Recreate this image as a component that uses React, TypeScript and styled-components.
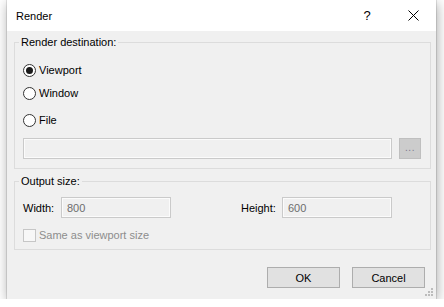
import React from 'react';
import styled, { createGlobalStyle } from 'styled-components';

const GlobalStyle = createGlobalStyle`
  html, body {
    margin: 0;
    padding: 0;
    background: #ffffff;
  }
  body {
    font-family: 'Liberation Sans', Arial, sans-serif;
    font-size: 11px;
    color: #000;
  }
`;

const Window = styled.div`
  position: relative;
  display: flex;
  flex-direction: column;
  margin-left: 7px;
  width: 429px;
  height: 299px;
  background-color: #f0f0f0;
  box-shadow: 0 0 0 1px rgba(0, 0, 0, 0.1), 1px 3px 12px rgba(0, 0, 0, 0.35);
`;

const TitleBar = styled.div`
  display: flex;
  align-items: center;
  height: 31px;
  padding-left: 9px;
  background-color: #fff;
`;

const Title = styled.span`
  flex: 1;
  font-size: 11px;
`;

const CaptionButton = styled.div`
  display: flex;
  align-items: center;
  justify-content: center;
  width: 46px;
  height: 31px;
  font-size: 13px;
`;

const Body = styled.div`
  flex: 1;
  display: flex;
  flex-direction: column;
  padding: 4px 5px 11px 7px;
`;

const Group = styled.fieldset<{ $gap?: number }>`
  margin: ${(p) => p.$gap ?? 0}px 0 0 0;
  padding: 0;
  border: 1px solid #dcdcdc;
  min-width: 0;
`;

const Legend = styled.legend`
  margin-left: 4px;
  padding: 0 2px;
  line-height: 14px;
  font-size: 11px;
`;

const GroupContent = styled.div<{ $top: number; $bottom: number }>`
  display: flex;
  flex-direction: column;
  padding: ${(p) => p.$top}px 9px ${(p) => p.$bottom}px 8px;
`;

const OptionRow = styled.label<{ $gap?: number; $disabled?: boolean }>`
  display: flex;
  align-items: center;
  gap: 3px;
  height: 20px;
  margin-top: ${(p) => p.$gap ?? 0}px;
  color: ${(p) => (p.$disabled ? '#8d8d8d' : '#000')};
`;

const RadioMark = styled.span<{ $checked?: boolean }>`
  display: flex;
  align-items: center;
  justify-content: center;
  box-sizing: border-box;
  width: 13px;
  height: 13px;
  border: 1px solid #333;
  border-radius: 50%;
  background-color: #fff;

  &::after {
    content: '';
    display: ${(p) => (p.$checked ? 'block' : 'none')};
    width: 7px;
    height: 7px;
    border-radius: 50%;
    background-color: #1a1a1a;
  }
`;

const CheckMark = styled.span`
  box-sizing: border-box;
  width: 13px;
  height: 13px;
  border: 1px solid #c6c6c6;
  background-color: #f7f7f7;
`;

const FileRow = styled.div`
  display: flex;
  gap: 7px;
  margin-top: 8px;
`;

const TextBox = styled.div<{ $width?: number }>`
  box-sizing: border-box;
  ${(p) => (p.$width ? `width: ${p.$width}px;` : 'flex: 1;')}
  height: 21px;
  padding-left: 5px;
  display: flex;
  align-items: center;
  border: 1px solid #cacaca;
  box-shadow: inset 0 0 0 1px #fbfbfb;
  background-color: #f0f0f0;
  color: #6d6d6d;
`;

const BrowseButton = styled.div`
  box-sizing: border-box;
  width: 22px;
  height: 21px;
  display: flex;
  align-items: center;
  justify-content: center;
  padding-bottom: 3px;
  border: 1px solid #bfbfbf;
  background-color: #cccccc;
  color: #7d7a8e;
  font-size: 10px;
  letter-spacing: 0.5px;
`;

const SizeRow = styled.div`
  display: flex;
  align-items: center;
`;

const FieldLabel = styled.span<{ $width: number; $gap?: number }>`
  width: ${(p) => p.$width}px;
  margin-left: ${(p) => p.$gap ?? 0}px;
`;

const Footer = styled.div`
  display: flex;
  justify-content: flex-end;
  gap: 12px;
  margin-top: auto;
  padding-right: 6px;
`;

const PushButton = styled.div`
  box-sizing: border-box;
  width: 73px;
  height: 21px;
  display: flex;
  align-items: center;
  justify-content: center;
  border: 1px solid #adadad;
  background-color: #e1e1e1;
`;

const SizeGrip = styled.svg`
  position: absolute;
  right: 2px;
  bottom: 2px;
`;

function CloseIcon(): React.ReactElement {
  return (
    <svg width="11" height="11" viewBox="0 0 11 11">
      <path d="M0.5 0.5 L10.5 10.5 M10.5 0.5 L0.5 10.5" stroke="#000" strokeWidth="1" fill="none" />
    </svg>
  );
}

function App(): React.ReactElement {
  return (
    <>
      <GlobalStyle />
      <Window>
        <TitleBar>
          <Title>Render</Title>
          <CaptionButton>?</CaptionButton>
          <CaptionButton>
            <CloseIcon />
          </CaptionButton>
        </TitleBar>
        <Body>
          <Group>
            <Legend>Render destination:</Legend>
            <GroupContent $top={11} $bottom={9}>
              <OptionRow>
                <RadioMark $checked />
                Viewport
              </OptionRow>
              <OptionRow $gap={3}>
                <RadioMark />
                Window
              </OptionRow>
              <OptionRow $gap={7}>
                <RadioMark />
                File
              </OptionRow>
              <FileRow>
                <TextBox />
                <BrowseButton>...</BrowseButton>
              </FileRow>
            </GroupContent>
          </Group>
          <Group $gap={5}>
            <Legend>Output size:</Legend>
            <GroupContent $top={9} $bottom={4}>
              <SizeRow>
                <FieldLabel $width={38}>Width:</FieldLabel>
                <TextBox $width={110}>800</TextBox>
                <FieldLabel $width={41} $gap={70}>
                  Height:
                </FieldLabel>
                <TextBox $width={110}>600</TextBox>
              </SizeRow>
              <OptionRow $gap={7} $disabled>
                <CheckMark />
                Same as viewport size
              </OptionRow>
            </GroupContent>
          </Group>
          <Footer>
            <PushButton>OK</PushButton>
            <PushButton>Cancel</PushButton>
          </Footer>
        </Body>
        <SizeGrip width="9" height="9" viewBox="0 0 9 9">
          <rect x="6" y="0" width="2" height="2" fill="#bcbcbc" />
          <rect x="3" y="3" width="2" height="2" fill="#bcbcbc" />
          <rect x="6" y="3" width="2" height="2" fill="#bcbcbc" />
          <rect x="0" y="6" width="2" height="2" fill="#bcbcbc" />
          <rect x="3" y="6" width="2" height="2" fill="#bcbcbc" />
          <rect x="6" y="6" width="2" height="2" fill="#bcbcbc" />
        </SizeGrip>
      </Window>
    </>
  );
}

export default App;
